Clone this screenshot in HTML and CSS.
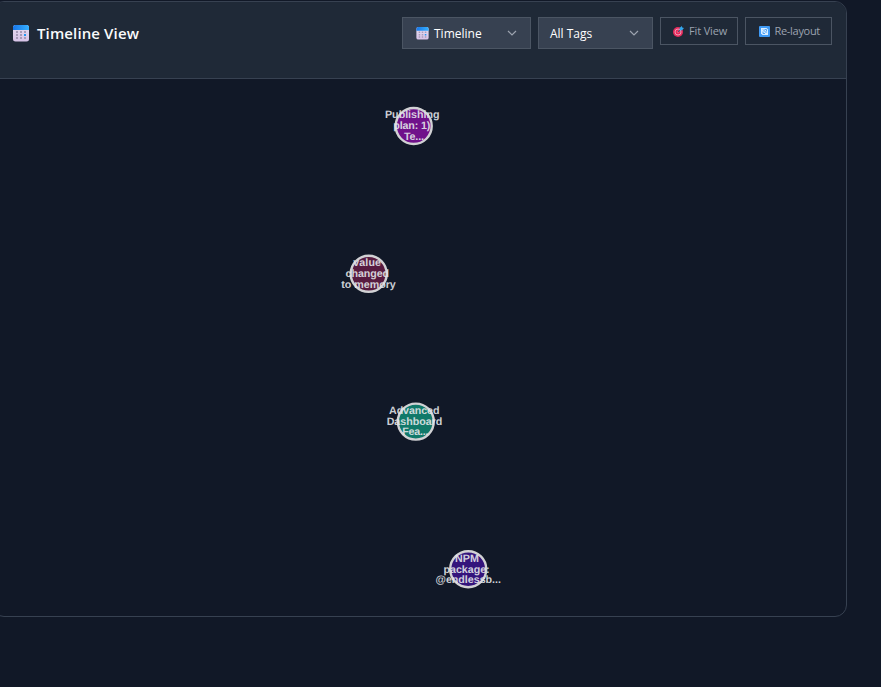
FILE: index.html
```html
<!DOCTYPE html>
<html lang="en">
<head>
<meta charset="utf-8">
<title>Timeline View</title>
<link rel="stylesheet" href="styles.css">
</head>
<body>
<svg class="defs" width="0" height="0" aria-hidden="true">
  <defs>
    <linearGradient id="blue"><stop offset="0" stop-color="#1976e8"/><stop offset="1" stop-color="#35b0ff"/></linearGradient>
    <linearGradient id="paper" x2="0" y2="1"><stop offset="0" stop-color="#e4dcee"/><stop offset="1" stop-color="#d8c4e8"/></linearGradient>
    <symbol id="calendar" viewBox="0 0 16 17">
      <rect width="16" height="16.5" rx="2.5" fill="url(#paper)"/>
      <path d="M0 5V2.5A2.5 2.5 0 0 1 2.5 0h11A2.5 2.5 0 0 1 16 2.5V5z" fill="url(#blue)"/>
      <path d="M3 6h2v2H3zM7 6h2v2H7zM11 6h2v2h-2zM3 9h2v2H3zM7 9h2v2H7zM3 12h2v2H3zM7 12h2v2H7zM11 12h2v2h-2z" fill="#a79bb8"/>
      <path d="M11 9h2v2h-2z" fill="#2196f3"/>
    </symbol>
  </defs>
</svg>
<main class="panel">
  <header class="toolbar">
    <h1 class="title"><svg class="title-icon"><use href="#calendar"/></svg><span>Timeline View</span></h1>
    <div class="controls">
      <div class="select view"><svg class="select-icon"><use href="#calendar"/></svg><span>Timeline</span><svg class="chevron" viewBox="0 0 10 6"><path d="M1 1l4 4 4-4"/></svg></div>
      <div class="select tags"><span>All Tags</span><svg class="chevron" viewBox="0 0 10 6"><path d="M1 1l4 4 4-4"/></svg></div>
      <button class="button fit"><svg class="button-icon" viewBox="0 0 11 11"><circle cx="5" cy="6" r="5" fill="#e52b5c"/><circle cx="5" cy="6" r="3" fill="none" stroke="#f3a5c0" stroke-width=".9"/><circle cx="5" cy="6" r="1.2" fill="#ef4e76"/><path d="M5 6l3.2-3.2" stroke="#36617f" stroke-width="1"/><path d="M6.6 4.4V1.9L8.8 0l.4 1.5 1.8.5L9.1 4.2z" fill="#32a7ee"/></svg><span>Fit View</span></button>
      <button class="button relayout"><svg class="button-icon" viewBox="0 0 11 11"><rect width="11" height="11" rx="1" fill="#3f9af5"/><path d="M2 2h5.5L9 3.5V9H3.5L2 7.5z" fill="#d9edff"/><path d="M4 3.5l3.5 3.5M4 5.5v2h2M5.5 3.5h2v2" fill="none" stroke="#3f9af5" stroke-width=".9"/></svg><span>Re-layout</span></button>
    </div>
  </header>
  <svg class="graph" viewBox="0 79 846 537">
    <g class="nodes">
      <circle cx="413.7" cy="126" r="18" fill="#70118a"/>
      <circle cx="368.7" cy="273.8" r="18" fill="#581b40"/>
      <circle cx="415.8" cy="421.6" r="18" fill="#11796a"/>
      <circle cx="468.2" cy="569.2" r="18" fill="#34147c"/>
    </g>
    <g class="node-labels">
      <text x="385" y="118.3" textLength="54.5">Publishing</text><text x="393.3" y="129" textLength="37">plan: 1)</text><text x="404" y="139.7" textLength="20">Te...</text>
      <text x="353.3" y="266.1" textLength="27.7">value</text><text x="345.6" y="276.8" textLength="43.5">changed</text><text x="341.3" y="287.5" textLength="54.5">to memory</text>
      <text x="389" y="414" textLength="50.5">Advanced</text><text x="386.7" y="424.7" textLength="55.5">Dashboard</text><text x="402.3" y="435.4" textLength="26.3">Fea...</text>
      <text x="455" y="561.8" textLength="24">NPM</text><text x="443.6" y="572.5" textLength="46">package:</text><text x="435.5" y="583.2" textLength="65.5">@endlessb...</text>
    </g>
  </svg>
</main>
</body>
</html>
```

FILE: styles.css
```css
* { box-sizing: border-box; }
body { margin: 0; height: 687px; overflow: hidden; background: #111827; font-family: "Open Sans", sans-serif; }
.defs { position: absolute; }
.panel { width: 855px; height: 616px; margin: 1px 0 0 -8px; border: 1px solid #374151; border-radius: 12px; overflow: hidden; }
.toolbar { height: 77px; padding: 15px 14px 0 20px; display: flex; justify-content: space-between; align-items: flex-start; background: #1f2937; border-bottom: 1px solid #374151; }
.title { display: flex; align-items: center; gap: 8px; height: 32px; margin: 0; color: #f9fafb; font: 600 15px/32px "Open Sans", sans-serif; letter-spacing: .12px; }
.title-icon { width: 16px; height: 17px; }
.controls { display: flex; align-items: flex-start; gap: 7px; }
.select { height: 32px; display: flex; align-items: center; border: 1px solid #4b5563; background: #374151; color: #fff; padding: 0 13px 0 11px; font-size: 12px; line-height: 30px; white-space: nowrap; }
.select span { padding-top: 1px; }
.view { width: 129px; padding-left: 13px; }
.tags { width: 115px; }
.select-icon { width: 13px; height: 13px; margin-right: 5px; }
.chevron { width: 10px; height: 6px; margin-left: auto; fill: none; stroke: #9ca3af; stroke-width: 1.2; }
.button { height: 28px; display: flex; align-items: center; gap: 5px; padding: 0 0 0 12px; border: 1px solid #4b5563; background: transparent; color: #9ca3af; font: 11px/26px "Open Sans", sans-serif; letter-spacing: -.15px; white-space: nowrap; }
.button-icon { width: 11px; height: 11px; flex: none; }
.fit { width: 78px; }
.relayout { width: 87px; padding-left: 13px; gap: 4.5px; letter-spacing: -.3px; }
.graph { display: block; width: 846px; height: 537px; margin-left: 7px; }
.nodes circle { stroke: #d1d1d4; stroke-width: 2.4; }
.node-labels { font: bold 10.7px "Liberation Sans", sans-serif; fill: #e5e7eb; fill-opacity: .9; text-rendering: geometricPrecision; }
```
